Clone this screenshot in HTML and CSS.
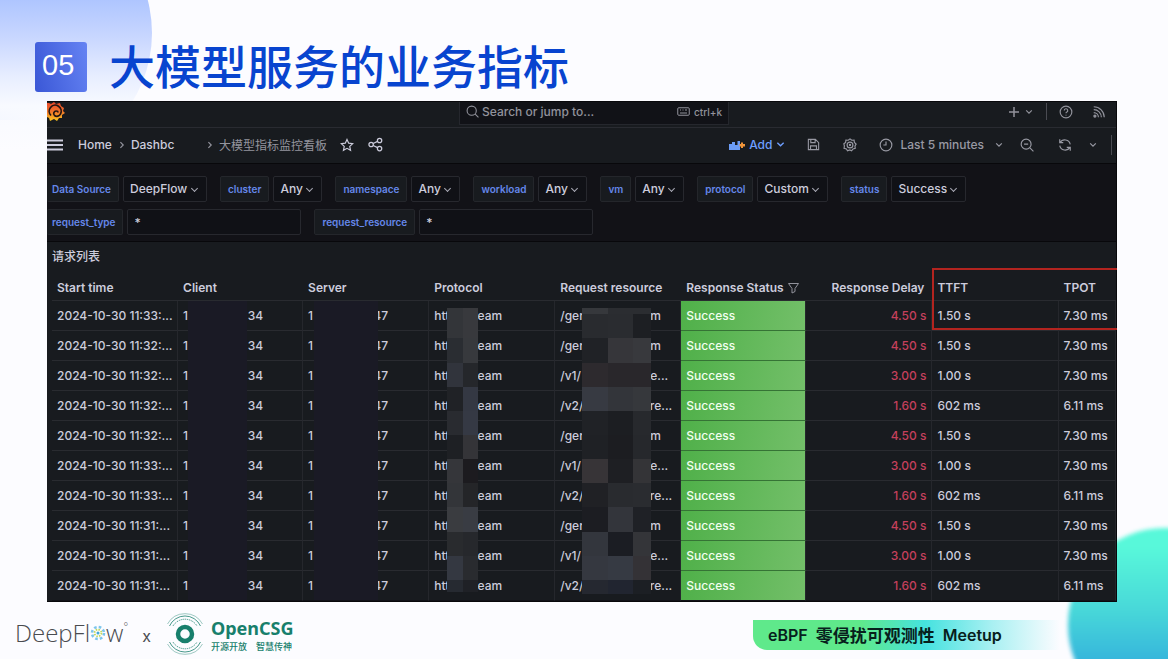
FILE: index.html
```html
<!DOCTYPE html>
<html lang="zh-CN">
<head>
<meta charset="utf-8">
<title>大模型服务的业务指标</title>
<link rel="stylesheet" href="styles.css">
</head>
<body>
<div class="slide">
  <div class="blob blob-blue"></div>
  <div class="blob blob-teal"></div>
  <header class="slide-head">
    <span class="number">05</span>
    <h1>大模型服务的业务指标</h1>
  </header>

  <main class="dash">
    <div class="topbar">
      <svg class="grafana" viewBox="0 0 18 20" width="18" height="20"><defs><linearGradient id="gf" x1="0" y1="0" x2="0" y2="1"><stop offset="0" stop-color="#e8452c"/><stop offset=".5" stop-color="#f0742a"/><stop offset="1" stop-color="#fbc61f"/></linearGradient></defs><path fill="url(#gf)" d="M0 1h2l2 1 3-2 2 2 4-1 1 3 3 2-1 3 2 2-3 2v3l-3 0-2 3-3-2-4 2-1-3-2-1z"/><path d="M4 13.500a6 6 0 1 1 9.500-1.500a4 4 0 0 1-6 1.500a2.600 2.600 0 0 1 2-4.500q1.500 0 1.500 1.500" fill="none" stroke="#231512" stroke-width="1.700"/></svg>
      <div class="search">
        <svg class="ico" viewBox="0 0 24 24" width="13" height="13"><circle cx="10.500" cy="10.500" r="8.500"/><path d="M17 17l6 6"/></svg>
        <input type="text" aria-label="Search" placeholder="Search or jump to...">
        <svg class="ico" viewBox="0 0 26 18" width="13" height="9"><rect x="1.500" y="1.500" width="23" height="15" rx="2"/><path d="M6 6h2M11 6h2M16 6h4M6 12h14"/></svg>
        <kbd>ctrl+k</kbd>
      </div>
      <div class="top-tools">
        <button class="tool plus" aria-label="New"><svg class="ico" viewBox="0 0 24 24" width="12" height="12"><path class="thick" d="M12 2v20M2 12h20"/></svg><svg class="ico" viewBox="0 0 10 10" width="8" height="8"><path class="chev" d="M1.500 3l3.500 3.500L8.500 3"/></svg></button>
        <span class="rule"></span>
        <button class="tool help" aria-label="Help"><svg class="ico" viewBox="0 0 24 24" width="14" height="14"><circle cx="12" cy="12" r="10"/><path d="M9 9.500a3 3 0 1 1 4 2.800q-1 .5-1 1.700M12 16.500v1.500"/></svg></button>
        <button class="tool" aria-label="News"><svg class="ico" viewBox="0 0 24 24" width="14" height="14"><path d="M3 3a18 18 0 0 1 18 18M3 8a13 13 0 0 1 13 13M3 13a8 8 0 0 1 8 8"/><circle cx="5" cy="19" r="1.800" fill="currentColor"/></svg></button>
      </div>
    </div>

    <nav class="navbar">
      <button class="tool" aria-label="Menu"><svg class="ico bright" viewBox="0 0 16 12" width="16" height="12"><path class="bars" d="M0 1.500h16M0 6h16M0 10.500h16"/></svg></button>
      <a class="home" href="#">Home</a>
      <svg class="ico sep" viewBox="0 0 10 10" width="8" height="8"><path class="chev" d="M3 1.500L6.500 5L3 8.500"/></svg>
      <a class="crumb" href="#">Dashbc</a>
      <svg class="ico sep" viewBox="0 0 10 10" width="8" height="8"><path class="chev" d="M3 1.500L6.500 5L3 8.500"/></svg>
      <span class="here">大模型指标监控看板</span>
      <button class="tool star" aria-label="Star"><svg class="ico bright" viewBox="0 0 24 24" width="14" height="14"><path d="M12 2.500l2.900 6.300 6.900.8-5.100 4.700 1.400 6.800L12 17.700l-6.100 3.400 1.400-6.800-5.100-4.700 6.900-.8z"/></svg></button>
      <button class="tool" aria-label="Share"><svg class="ico bright" viewBox="0 0 24 24" width="15" height="15"><circle cx="5" cy="12" r="3.500"/><circle cx="18.500" cy="5.500" r="3.500"/><circle cx="18.500" cy="18.500" r="3.500"/><path d="M8.200 10.500l7.200-3.500M8.200 13.500l7.200 3.500"/></svg></button>
      <div class="nav-tools">
        <button class="tool add"><svg viewBox="0 0 16 10" width="16" height="10"><path fill="#6b9cf5" d="M0 4h3v6H0zM3 2h3v8H3zM6 5h3v5H6zM8.500 1H11v9H8.500z"/><path fill="#f0953a" d="M12 2.500v1.500H10.500v2.500H12V8h2V6.500h2V4h-2V2.500z"/></svg>Add<svg class="ico" viewBox="0 0 10 10" width="9" height="9"><path class="chev" d="M1.500 3l3.500 3.500L8.500 3"/></svg></button>
        <button class="tool" aria-label="Save"><svg class="ico" viewBox="0 0 24 24" width="13" height="13"><path d="M2.500 2.500h13l6 6v13h-19zM7 2.500v6h8v-6M6.500 21.500v-7h11v7"/></svg></button>
        <button class="tool gear" aria-label="Settings"><svg class="ico" viewBox="0 0 24 24" width="14" height="14"><path d="M12 1.500l3 2.300 4-.3.500 4 3 2.900-2 3.400.5 4-3.900 1-2.300 3.200-3.300-1.500-3.700 1.500-2-3.300-4-1 .6-4L1.500 10l3-2.500.5-4 4 .3z"/><circle cx="12" cy="12" r="5"/><circle cx="12" cy="12" r="1"/></svg></button>
        <button class="tool time"><svg class="ico" viewBox="0 0 24 24" width="14" height="14"><circle cx="12" cy="12" r="10"/><path d="M12 6v6H7.500"/></svg>Last 5 minutes<svg class="ico" viewBox="0 0 10 10" width="8" height="8"><path class="chev" d="M1.500 3l3.500 3.500L8.500 3"/></svg></button>
        <button class="tool out" aria-label="Zoom out"><svg class="ico" viewBox="0 0 24 24" width="14" height="14"><circle cx="10.500" cy="10.500" r="8.500"/><path d="M17 17l6 6M7 10.500h7"/></svg></button>
        <button class="tool sync" aria-label="Refresh"><svg class="ico" viewBox="0 0 24 24" width="14" height="14"><path d="M3 2v6h6M3.500 8a9.500 9.500 0 0 1 17.500 3M21 22v-6h-6M20.500 16A9.500 9.500 0 0 1 3 13"/></svg></button>
        <button class="tool" aria-label="Refresh interval"><svg class="ico" viewBox="0 0 10 10" width="8" height="8"><path class="chev" d="M1.500 3l3.500 3.500L8.500 3"/></svg></button>
        <span class="rule"></span>
      </div>
    </nav>

    <form class="vars">
      <div class="var-row">
        <div class="var"><label for="v1" class="first">Data Source</label><span class="pick"><select id="v1"><option>DeepFlow</option></select></span></div>
        <div class="var"><label for="v2">cluster</label><span class="pick"><select id="v2"><option>Any</option></select></span></div>
        <div class="var"><label for="v3">namespace</label><span class="pick"><select id="v3"><option>Any</option></select></span></div>
        <div class="var"><label for="v4">workload</label><span class="pick"><select id="v4"><option>Any</option></select></span></div>
        <div class="var"><label for="v5">vm</label><span class="pick"><select id="v5"><option>Any</option></select></span></div>
        <div class="var"><label for="v6">protocol</label><span class="pick"><select id="v6"><option>Custom</option></select></span></div>
        <div class="var"><label for="v7">status</label><span class="pick"><select id="v7"><option>Success</option></select></span></div>
      </div>
      <div class="var-row">
        <div class="var"><label for="v8" class="first">request_type</label><input id="v8" type="text" value="*"></div>
        <div class="var"><label for="v9">request_resource</label><input id="v9" type="text" value="*"></div>
      </div>
    </form>

    <section class="panel">
      <h2>请求列表</h2>
      <div class="table-wrap">
        <table>
          <thead><tr><th>Start time</th><th>Client</th><th>Server</th><th>Protocol</th><th>Request resource</th><th>Response Status <svg class="ico funnel" viewBox="0 0 24 24" width="13" height="12"><path d="M2 3h20l-7 10v6l-6 3v-9z"/></svg></th><th class="delay-head">Response Delay</th><th>TTFT</th><th>TPOT</th></tr></thead>
          <tbody id="rows"></tbody>
        </table>
        <div class="mask mask-client"></div>
        <div class="mask mask-server"></div>
        <svg class="mosaic mosaic-protocol" id="mp" width="31" height="284" shape-rendering="crispEdges"></svg>
        <svg class="mosaic mosaic-request" id="mr" width="69" height="286" shape-rendering="crispEdges"></svg>
        <div class="callout"></div>
      </div>
    </section>
  </main>

  <footer class="foot">
    <div class="deepflow">DeepFl<svg viewBox="0 0 16 16" width="16" height="16"><circle cx="8" cy="8" r="6" fill="none" stroke="#7cc5ec" stroke-width="2.600" stroke-dasharray="2.600 2.110"/><circle cx="8" cy="8" r="3.400" fill="none" stroke="#c3d95a" stroke-width="1.800" stroke-dasharray="1.500 1.170"/><circle cx="8" cy="8" r="1.500" fill="#3fa9dc"/></svg>w<sup>°</sup></div>
    <span class="cross">x</span>
    <svg class="csg-mark" viewBox="0 0 40 42" width="40" height="42" fill="none" stroke="#187f6c"><circle cx="20" cy="21" r="7" stroke-width="4.500"/><path d="M8 13a14 14 0 0 1 24 0M8 29a14 14 0 0 0 24 0" stroke-width="1" stroke-dasharray="1 1"/><path d="M4.500 13a17 17 0 0 1 31 0M4.500 29a17 17 0 0 0 31 0" stroke-width=".8"/><path d="M2.500 11a20 20 0 0 1 35 0M2.500 31a20 20 0 0 0 35 0" stroke-width=".6" opacity=".7"/></svg>
    <div class="csg"><strong>OpenCSG</strong><span>开源开放　智慧传神</span></div>
    <div class="meetup">eBPF<span>零侵扰可观测性</span>Meetup</div>
  </footer>
</div>
<script src="rows.js"></script>
</body>
</html>
```
FILE: styles.css
```css
* { box-sizing: border-box; }
body { margin: 0; background: #fcfcff; font-family: Inter, "Noto Sans CJK SC", sans-serif; }
.slide { position: relative; min-height: 100vh; overflow: hidden; display: flex; flex-direction: column; background: linear-gradient(to right, #eff3ff, #fcfcff 50px) no-repeat 0 0 / 100% 120px, #fcfcff; }
.slide > * { position: relative; }
.slide > .blob { position: absolute; border-radius: 50%; }
.blob-blue { left: -108px; top: -97px; width: 260px; height: 260px; background: linear-gradient(to bottom, #aec5ff 37%, #c9d7ff 52%, #e8eeff 67%, #f8faff 78%, #fcfcff00 95%); }
.blob-teal { right: -94px; bottom: -63px; width: 194px; height: 194px; background: linear-gradient(to bottom, #58f8da 10%, #48d8d9 42%, #35b4dc 70%); filter: blur(2px); }

.slide-head { display: flex; align-items: flex-start; gap: 22px; padding: 42px 35px 9px; }
.number { width: 52px; height: 50px; border-radius: 3px; background: linear-gradient(75deg, #3a57d6, #6583f3); color: #fff; font: 29px/46px "Liberation Sans", sans-serif; padding-left: 7px; }
h1 { margin: 0; color: #0844cf; font: 500 46px/44px "Noto Sans CJK SC", sans-serif; }

.dash { margin: 0 51px 0 47px; background: #181b1f; color: #ccccdc; border: solid #08080b; border-width: 1px 1px 1px 0; font-size: 12px; font-weight: 500; }
button { font: inherit; color: inherit; background: none; border: 0; padding: 0; display: flex; align-items: center; }
.ico { fill: none; stroke: currentColor; stroke-width: 2; flex: none; display: block; }
.chev { stroke-width: 1.5; }
.thick { stroke-width: 3; }
.bars { stroke-width: 2; }
.bright { color: #ccccdc; }
.rule { width: 1px; height: 17px; background: #4a4b52; }

.topbar { display: grid; grid-template-columns: 412fr 270px 387fr; height: 26px; border-bottom: 1px solid #292b31; color: #92939c; }
.search { display: flex; align-items: center; height: 23px; padding: 0 6px 3px; background: #111217; border: 1px solid #25272d; border-top: 0; }
.search input { flex: 1; min-width: 0; border: 0; padding: 0 3px; background: none; outline: 0; font: 500 12px/18px Inter, sans-serif; }
.search input::placeholder { color: #92939c; }
kbd { font: 500 10px/18px Inter, sans-serif; margin-left: 4px; }
.top-tools { display: flex; align-items: center; justify-content: flex-end; padding: 0 10px 6px 0; }
.plus { gap: 5px; margin-right: 13px; }
.help { margin: 0 19px 0 12px; }

.navbar { display: flex; align-items: center; height: 36px; padding-bottom: 2px; border-bottom: 1px solid #08080b; }
.home { margin: 0 6px 0 15px; }
a { color: inherit; text-decoration: none; }
.crumb { width: 65px; margin: 0 10px 0 5px; }
.navbar .sep { color: #92939c; }
.here { margin-left: 5px; font-weight: 400; color: #94959e; }
.star { margin: 0 14px 0 13px; }
.nav-tools { display: flex; align-items: center; margin-left: auto; padding-right: 4px; color: #9899a3; }
.add { color: #6e9fff; gap: 4px; margin-right: 22px; }
.gear { margin: 0 22px 0 23px; }
.time { gap: 7px; }
.time .ico:last-child { margin-left: 4px; }
.out { margin: 0 24px 0 17px; }
.sync { margin-right: 17px; }
.nav-tools > .rule { margin-left: 14px; height: 20px; }

.vars { display: grid; gap: 7px; padding: 12px 0 6px; background: #121217; border-bottom: 1px solid #08080b; }
.var-row { display: flex; gap: 13px; }
.var { display: flex; gap: 4px; }
.var label { height: 26px; padding: 0 7px; background: #181b1f; border: 1px solid #24262b; border-radius: 2px; color: #6587ea; font-size: 10px; font-weight: 600; line-height: 24px; }
.var .first { padding: 0 7px 0 5px; border-left: 0; }
.pick { position: relative; display: flex; }
.pick::after { content: ""; position: absolute; right: 10px; top: 10px; width: 4px; height: 4px; border: solid #a9aab6; border-width: 0 1px 1px 0; transform: rotate(45deg); pointer-events: none; }
.var select, .var input { appearance: none; height: 26px; margin: 0; padding: 0 18px 0 6px; background: #101116; border: 1px solid #27282e; border-radius: 2px; color: #ccccdc; font: 500 12px/24px Inter, sans-serif; }
.var input { width: 174px; }

.panel { padding: 7px 0 0 5px; }
h2 { margin: 0; font: 500 12px/16px Inter, "Noto Sans CJK SC", sans-serif; }
.table-wrap { position: relative; margin-top: 9px; }
table { width: 100%; table-layout: fixed; border-collapse: separate; border-spacing: 0; }
th, td { width: 11.85%; padding: 0 5px; text-align: left; white-space: nowrap; overflow: hidden; border-bottom: 1px solid #292b30; font-weight: 500; }
th:nth-child(2), th:nth-child(6) { width: 11.75%; }
th:last-child, td:last-child { width: 5.4%; }
th { height: 27px; padding-top: 1px; line-height: 25px; font-weight: 600; }
td { height: 30px; line-height: 29px; border-right: 1px solid #25272c; }
tr:last-child td { border-bottom-color: #121318; }
.delay-head { text-align: right; padding-right: 8px; }
.funnel { display: inline-block; vertical-align: -2px; color: #92939c; }
td.ok { background: linear-gradient(100deg, #4fb049, #73bf69); color: #f2fff0; border-bottom-color: #357335; }
td.delay { color: #c4405c; text-align: right; }
.split { display: flex; justify-content: space-between; width: 80px; }
.split-protocol { width: 68px; }
.split-request { justify-content: flex-start; width: 112px; }
.split-request span:first-child { width: 90px; }
.mask, .mosaic, .callout { position: absolute; }
.mask { top: 27px; bottom: 1px; background: #1a1a25; }
.mask-client { left: 12.8%; width: 59px; }
.mask-server { left: 24.6%; width: 64px; }
.mosaic { top: 34px; }
.mosaic-protocol { left: 37.1%; }
.mosaic-request { left: 49.8%; }
.callout { left: 82.7%; right: -1px; top: -6px; height: 62px; border: 2px solid #b3241f; border-right: 0; }

.foot { display: flex; align-items: center; flex: 1; min-height: 57px; padding: 4px 0 0 15px; }
.deepflow { display: flex; align-items: center; color: #494b4f; font: 300 24px/30px "Open Sans", sans-serif; }
.deepflow sup { align-self: flex-start; font-size: 11px; line-height: 16px; }
.cross { margin: 6px 14px 0 14px; color: #4b4c50; font-size: 16px; }
.csg-mark { margin-top: 3px; }
.csg { display: grid; gap: 2px; margin: 6px 0 0 6px; color: #187f6c; }
.csg strong { font: 700 18px/20px "Noto Sans", sans-serif; }
.csg span { font: 500 9px/13px "Noto Sans CJK SC", sans-serif; }
.meetup { display: flex; gap: 8px; margin: 5px 108px 0 auto; width: 307px; height: 30px; padding-left: 15px; border-bottom-left-radius: 14px; background: linear-gradient(to right, #5fe98b 35%, #45e2df 56%, #a9f0f2 78%, #fcfcff); color: #07201c; font: 600 16px/30px Inter, sans-serif; }
.meetup span { font: 700 17px/30px "Noto Sans CJK SC", sans-serif; }
```
FILE: rows.js
```js
const data = [
  ["33", "34", "gen", "m", "4.50 s", "1.50 s", "7.30 ms"],
  ["32", "34", "gen", "m", "4.50 s", "1.50 s", "7.30 ms"],
  ["32", "34", "v1/", "e...", "3.00 s", "1.00 s", "7.30 ms"],
  ["32", "34", "v2/", "re...", "1.60 s", "602 ms", "6.11 ms"],
  ["32", "34", "gen", "m", "4.50 s", "1.50 s", "7.30 ms"],
  ["33", "34", "v1/", "e...", "3.00 s", "1.00 s", "7.30 ms"],
  ["33", ":34", "v2/", "re...", "1.60 s", "602 ms", "6.11 ms"],
  ["31", ":34", "gen", "m", "4.50 s", "1.50 s", "7.30 ms"],
  ["31", "34", "v1/", "e...", "3.00 s", "1.00 s", "7.30 ms"],
  ["31", "34", "v2/", "re...", "1.60 s", "602 ms", "6.11 ms"]
];
const split = (a, b, c = "") => `<div class="split ${c}"><span>${a}</span><span>${b}</span></div>`;
document.getElementById("rows").innerHTML = data.map(r => `<tr>
<td>2024-10-30 11:${r[0]}:...</td>
<td>${split("1", r[1])}</td>
<td>${split("1", "47")}</td>
<td>${split("htt", "eam", "split-protocol")}</td>
<td>${split("/" + r[2], r[3], "split-request")}</td>
<td class="ok">Success</td>
<td class="delay">${r[4]}</td><td>${r[5]}</td><td>${r[6]}</td></tr>`).join("");

// Pixelated blocks: column edges, row edges, one colour list per row.
function mosaic(id, xs, ys, rows) {
  let out = "";
  rows.forEach((row, j) => row.split(" ").forEach((c, i) => {
    out += `<rect x="${xs[i]}" y="${ys[j]}" width="${xs[i + 1] - xs[i]}" height="${ys[j + 1] - ys[j]}" fill="#${c}"/>`;
  }));
  document.getElementById(id).innerHTML = out;
}
mosaic("mp", [0, 16, 31], [0, 30, 55, 79, 103, 127, 151, 175, 199, 224, 248, 272, 284], [
  "333539 38393d", "2a2d32 37393d", "31343c 25272b", "202226 343843", "292b30 353944", "1e2024 343438",
  "35363a 1c1b1f", "333539 242528", "3a3c40 393c43", "292b2e 26282c", "343841 292b2f", "262a31 1f2126"]);
mosaic("mr", [0, 26, 51, 69], [0, 6, 30, 55, 79, 103, 127, 151, 175, 199, 224, 248, 272, 286], [
  "36383c 2b2d31 2b2d31", "292b2f 2a2c30 1d1f23", "202226 36363a 38393d", "2d2a2e 29272b 29272b",
  "373a42 33353a 36383c", "202226 1c1e22 27292d", "1f2125 1c1d21 26282c", "373437 1e1f23 343437",
  "202125 292b2f 2a2c30", "1c1d22 33353b 1f2126", "33363d 1b1d23 343539", "353840 363a43 343236",
  "252830 212530 1c1f24"]);
```
